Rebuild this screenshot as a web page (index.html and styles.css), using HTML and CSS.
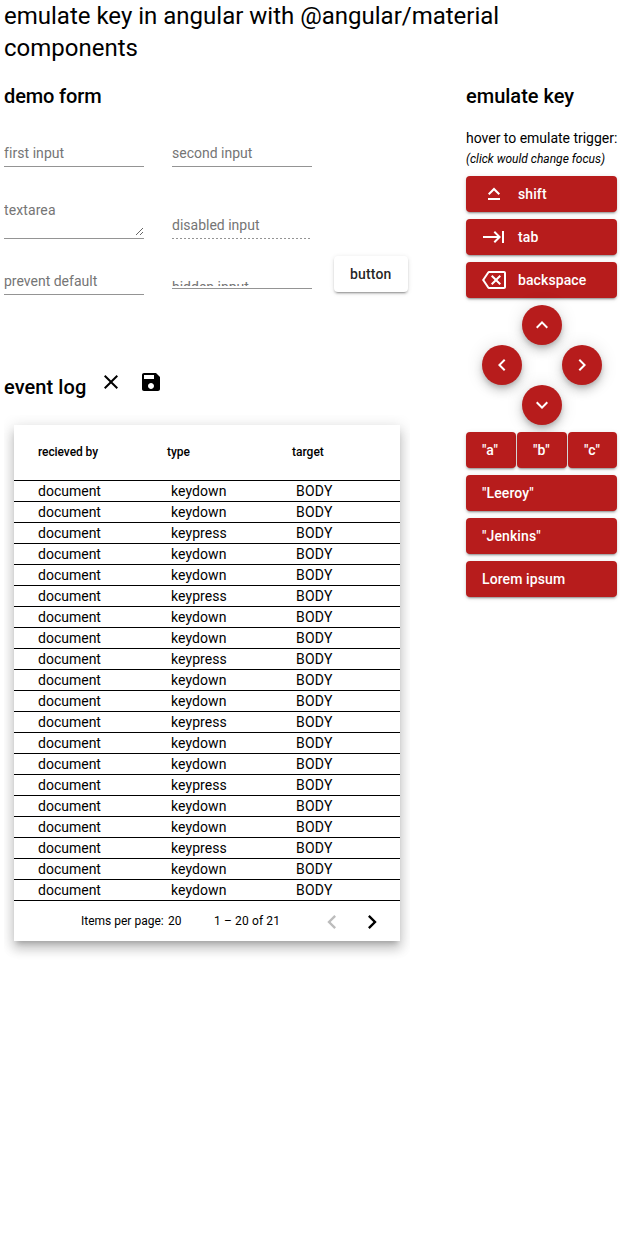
FILE: index.html
```html
<!DOCTYPE html>
<html lang="en">
<head>
<meta charset="utf-8">
<title>emulate key</title>
<link rel="stylesheet" href="styles.css">
</head>
<body>
<h1 class="title">emulate key in angular with @angular/material components</h1>
<div class="layout">
  <main class="main">
    <h2 class="heading form-title">demo form</h2>
    <form class="form">
      <div class="form-row row-first">
        <div class="field"><input class="control wide-text" placeholder="first input"></div>
        <div class="field"><input class="control" placeholder="second input"></div>
      </div>
      <div class="form-row row-second">
        <div class="field"><textarea class="control area" placeholder="textarea"></textarea></div>
        <div class="field disabled"><input class="control" placeholder="disabled input" disabled></div>
      </div>
      <div class="form-row row-third">
        <div class="field"><input class="control" placeholder="prevent default"></div>
        <div class="field clipped"><div class="clip"><span>hidden input</span></div></div>
        <button type="button" class="btn plain">button</button>
      </div>
    </form>
    <div class="log-head">
      <h2 class="heading log-title">event log</h2>
      <svg class="icon" viewBox="0 0 24 24"><path d="M19 6.41L17.59 5 12 10.59 6.41 5 5 6.41 10.59 12 5 17.59 6.41 19 12 13.41 17.59 19 19 17.59 13.41 12z"/></svg>
      <svg class="icon" viewBox="0 0 24 24"><path d="M17 3H5c-1.11 0-2 .9-2 2v14c0 1.1.89 2 2 2h14c1.1 0 2-.9 2-2V7l-4-4zm-5 16c-1.66 0-3-1.34-3-3s1.34-3 3-3 3 1.34 3 3-1.34 3-3 3zm3-10H5V5h10v4z"/></svg>
    </div>
    <div class="log-wrap">
      <div class="card">
        <div class="tr th"><span>recieved by</span><span>type</span><span>target</span></div>
        <div class="tr"><span>document</span><span>keydown</span><span>BODY</span></div>
        <div class="tr"><span>document</span><span>keydown</span><span>BODY</span></div>
        <div class="tr"><span>document</span><span>keypress</span><span>BODY</span></div>
        <div class="tr"><span>document</span><span>keydown</span><span>BODY</span></div>
        <div class="tr"><span>document</span><span>keydown</span><span>BODY</span></div>
        <div class="tr"><span>document</span><span>keypress</span><span>BODY</span></div>
        <div class="tr"><span>document</span><span>keydown</span><span>BODY</span></div>
        <div class="tr"><span>document</span><span>keydown</span><span>BODY</span></div>
        <div class="tr"><span>document</span><span>keypress</span><span>BODY</span></div>
        <div class="tr"><span>document</span><span>keydown</span><span>BODY</span></div>
        <div class="tr"><span>document</span><span>keydown</span><span>BODY</span></div>
        <div class="tr"><span>document</span><span>keypress</span><span>BODY</span></div>
        <div class="tr"><span>document</span><span>keydown</span><span>BODY</span></div>
        <div class="tr"><span>document</span><span>keydown</span><span>BODY</span></div>
        <div class="tr"><span>document</span><span>keypress</span><span>BODY</span></div>
        <div class="tr"><span>document</span><span>keydown</span><span>BODY</span></div>
        <div class="tr"><span>document</span><span>keydown</span><span>BODY</span></div>
        <div class="tr"><span>document</span><span>keypress</span><span>BODY</span></div>
        <div class="tr"><span>document</span><span>keydown</span><span>BODY</span></div>
        <div class="tr"><span>document</span><span>keydown</span><span>BODY</span></div>
        <div class="pager">
          <span class="per-page">Items per page:</span>
          <span class="size">20</span>
          <span class="range">1 – 20 of 21</span>
          <svg class="nav off" viewBox="0 0 24 24"><path d="M15.41 7.41L14 6l-6 6 6 6 1.41-1.41L10.83 12z"/></svg>
          <svg class="nav" viewBox="0 0 24 24"><path d="M10 6L8.59 7.41 13.17 12l-4.58 4.59L10 18l6-6z"/></svg>
        </div>
      </div>
    </div>
  </main>
  <aside class="side">
    <h2 class="heading">emulate key</h2>
    <p class="hint">hover to emulate trigger:</p>
    <p class="note">(click would change focus)</p>
    <div class="keys">
      <button class="btn red"><svg class="icon" viewBox="0 0 24 24"><path d="M12 8.41L16.59 13 18 11.59l-6-6-6 6L7.41 13 12 8.41zM6 18h12v-2H6v2z"/></svg>shift</button>
      <button class="btn red"><svg class="icon" viewBox="0 0 24 24"><path d="M11.59 7.41L15.17 11H1v2h14.17l-3.59 3.59L13 18l6-6-6-6-1.41 1.41zM20 6v12h2V6h-2z"/></svg>tab</button>
      <button class="btn red"><svg class="icon" viewBox="0 0 24 24"><path d="M22 3H7c-.69 0-1.23.35-1.59.88L0 12l5.41 8.11c.36.53.9.89 1.59.89h15c1.1 0 2-.9 2-2V5c0-1.1-.9-2-2-2zm0 16H7.07L2.4 12l4.66-7H22v14zm-11.59-2L14 13.41 17.59 17 19 15.59 15.41 12 19 8.41 17.59 7 14 10.59 10.41 7 9 8.41 12.59 12 9 15.59z"/></svg>backspace</button>
      <div class="pad">
        <button class="fab up"><svg class="icon" viewBox="0 0 24 24"><path d="M7.41 15.41L12 10.83l4.59 4.58L18 14l-6-6-6 6z"/></svg></button>
        <button class="fab left"><svg class="icon" viewBox="0 0 24 24"><path d="M15.41 16.59L10.83 12l4.58-4.59L14 6l-6 6 6 6z"/></svg></button>
        <button class="fab right"><svg class="icon" viewBox="0 0 24 24"><path d="M8.59 16.59L13.17 12 8.59 7.41 10 6l6 6-6 6z"/></svg></button>
        <button class="fab down"><svg class="icon" viewBox="0 0 24 24"><path d="M7.41 8.59L12 13.17l4.59-4.58L18 10l-6 6-6-6z"/></svg></button>
      </div>
      <div class="letters">
        <button class="btn red">"a"</button>
        <button class="btn red">"b"</button>
        <button class="btn red">"c"</button>
      </div>
      <button class="btn red">"Leeroy"</button>
      <button class="btn red">"Jenkins"</button>
      <button class="btn red">Lorem ipsum</button>
    </div>
  </aside>
</div>
</body>
</html>
```
FILE: styles.css
```css
* { box-sizing: border-box; }
body {
  margin: 0;
  padding: 0 3px 0 4px;
  background: #fff;
  color: #000;
  font: 400 14px/20px Roboto, sans-serif;
}
button, input, textarea { font-family: inherit; }
.title { margin: 0 0 16px; font: 400 24px/32px Roboto, sans-serif; }
.heading { margin: 0; font: 500 20px/32px Roboto, sans-serif; }
.form-title { letter-spacing: -.12px; }
.layout { display: flex; justify-content: space-between; align-items: flex-start; }
.main { width: 406px; }
.side { width: 151px; }
.icon { width: 24px; height: 24px; flex: none; fill: currentColor; }

/* form */
.form-row { display: flex; align-items: flex-end; gap: 28px; }
.row-first { height: 55px; }
.row-second { height: 72px; }
.row-third { height: 56px; }
.field { width: 140px; flex: none; padding-bottom: 4px; border-bottom: 1px solid #949494; }
.control {
  display: block;
  width: 100%;
  height: 18px;
  margin: 0;
  padding: 0;
  border: 0;
  outline: 0;
  background: none;
  font-size: 14px;
  line-height: 18px;
}
.control::placeholder { color: #757575; opacity: 1; }
.wide-text { letter-spacing: .06px; }
.area { height: 35px; resize: vertical; overflow: auto; letter-spacing: .1px; }
.field:has(.area) { padding-bottom: 2px; }
.disabled {
  border-bottom: 0;
  padding-bottom: 5px;
  background: repeating-linear-gradient(to right, #949494 0 2px, transparent 2px 4px) left bottom / 138px 1px no-repeat;
}
.clipped { margin-bottom: 6px; padding-bottom: 2px; }
.clip { height: 8px; overflow: hidden; color: #757575; line-height: 18px; }
.clip span { display: block; }
.btn {
  display: flex;
  align-items: center;
  height: 36px;
  padding: 0 16px;
  border: 0;
  border-radius: 4px;
  font-size: 14px;
  font-weight: 500;
  line-height: 36px;
  letter-spacing: .1px;
  white-space: nowrap;
  box-shadow: 0 3px 1px -2px rgba(0,0,0,.2), 0 2px 2px 0 rgba(0,0,0,.14), 0 1px 5px 0 rgba(0,0,0,.12);
}
.plain { width: 74px; margin: 0 0 3px -6px; background: #fff; color: rgba(0,0,0,.87); letter-spacing: .15px; }

/* event log */
.log-head { display: flex; gap: 16px; margin-top: 75px; height: 45px; }
.log-title { margin-top: 1px; width: 83px; margin-right: -4px; white-space: nowrap; letter-spacing: .08px; }
.log-wrap { padding: 10px 10px 30px; overflow: hidden; }
.card {
  background: #fff;
  box-shadow: 0 5px 5px -3px rgba(0,0,0,.2), 0 8px 10px 1px rgba(0,0,0,.14), 0 3px 14px 2px rgba(0,0,0,.12);
}
.tr {
  display: grid;
  grid-template-columns: 133px 125px 1fr;
  height: 21px;
  padding: 0 24px;
  border-bottom: 1px solid #000;
  line-height: 20px;
}
.tr:not(.th) span:nth-child(2) { letter-spacing: .08px; }
.tr:not(.th) span:nth-child(3) { letter-spacing: .25px; }
.th { grid-template-columns: 129px 125px 1fr; height: 56px; font-size: 12px; font-weight: 500; line-height: 55px; }
.th span:first-child { letter-spacing: -.08px; }
.pager { display: flex; align-items: center; height: 40px; padding-left: 67px; font-size: 12px; }
.per-page { width: 87px; }
.size { width: 46px; }
.range { width: 104px; letter-spacing: .13px; }
.nav { width: 28px; height: 28px; margin: 2px 12px 0 0; flex: none; }
.off { opacity: .26; }

/* key panel */
.hint, .note { margin: 0; white-space: nowrap; }
.hint { margin-top: 16px; letter-spacing: -.02px; }
.note { margin-top: 2px; font-size: 12px; font-style: italic; line-height: 18px; }
.keys { display: flex; flex-direction: column; gap: 7px; margin-top: 8px; }
.red { background: #b71c1c; color: #fff; }
.red .icon { margin-right: 12px; }
.pad {
  display: grid;
  grid-template: repeat(3, 40px) / repeat(3, 40px);
  grid-template-areas: ". up ." "left . right" ". down .";
  margin-left: 16px;
}
.fab {
  display: grid;
  place-items: center;
  padding: 0;
  border: 0;
  border-radius: 50%;
  background: #b71c1c;
  color: #fff;
  box-shadow: 0 3px 5px -1px rgba(0,0,0,.2), 0 6px 10px 0 rgba(0,0,0,.14), 0 1px 18px 0 rgba(0,0,0,.12);
}
.up { grid-area: up; }
.left { grid-area: left; }
.right { grid-area: right; }
.down { grid-area: down; }
.letters { display: grid; grid-template-columns: 50px 50px 49px; gap: 1px; }
```
